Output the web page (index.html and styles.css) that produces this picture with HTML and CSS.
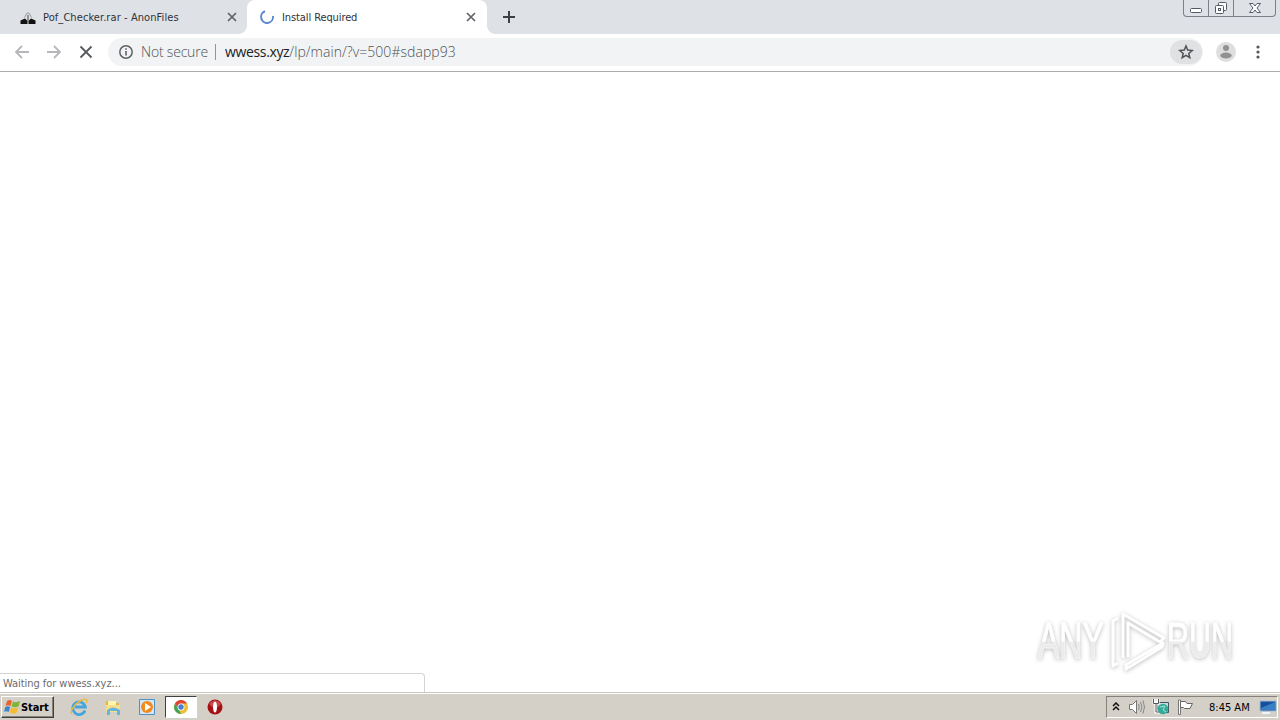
FILE: index.html
```html
<!DOCTYPE html>
<html lang="en">
<head>
    <meta charset="UTF-8">
    <title>Install Required</title>
    <link rel="stylesheet" href="styles.css">
</head>
<body>
    <div class="tabstrip">
        <div class="tab">
            <svg class="favicon" width="16" height="16" viewBox="0 0 16 16">
                <path d="M0.500 15V11.500L5 9.500L7.500 12V15ZM8.500 15V12L11 9.500L15.500 11.500V15Z" fill="#111"/>
                <path d="M4.500 8.500L7 4H9L11.500 8.500" fill="none" stroke="#999"/>
                <path d="M8 6V12" stroke="#444"/>
            </svg>
            <span class="tab-title files">Pof_Checker.rar - AnonFiles</span>
            <svg class="close" width="10" height="10" viewBox="0 0 10 10"><path d="M1 1L9 9M9 1L1 9"/></svg>
        </div>
        <div class="tab active">
            <svg class="favicon" width="16" height="16" viewBox="0 0 16 16">
                <path d="M14 7A6 6 0 1 1 6 2.300" fill="none" stroke="#5b87d0" stroke-width="2"/>
            </svg>
            <span class="tab-title install">Install Required</span>
            <svg class="close" width="10" height="10" viewBox="0 0 10 10"><path d="M1 1L9 9M9 1L1 9"/></svg>
        </div>
        <svg class="new-tab" width="12" height="12" viewBox="0 0 12 12"><path d="M6 0V12M0 6H12" stroke="#3c4043" stroke-width="2"/></svg>
        <div class="window-buttons">
            <span class="minimize"><svg width="14" height="16" viewBox="0 0 14 16"><rect x="1.5" y="8.5" width="11" height="4" rx="1" fill="#fff" stroke="#555b66"/></svg></span>
            <span class="restore"><svg width="14" height="16" viewBox="0 0 14 16" fill="#fff" stroke="#555b66"><rect x="4.5" y="2.5" width="8" height="8" rx="1"/><rect x="1.500" y="5.500" width="8" height="8" rx="1"/><rect x="4.500" y="8.500" width="2" height="2"/></svg></span>
            <span class="exit"><svg width="14" height="16" viewBox="0 0 14 16"><path d="M1.500 3.500H5L7 6L9 3.500H12.500L9 8L12.500 12.500H9L7 10L5 12.500H1.500L5 8Z" fill="#fff" stroke="#555b66"/></svg></span>
        </div>
    </div>

    <div class="toolbar">
        <svg class="nav" width="16" height="16" viewBox="0 0 16 16"><path d="M15 8H2M8 2L2 8L8 14" stroke="#b5b7ba"/></svg>
        <svg class="nav" width="16" height="16" viewBox="0 0 16 16"><path d="M1 8H14M8 2L14 8L8 14" stroke="#b5b7ba"/></svg>
        <svg class="nav" width="16" height="16" viewBox="0 0 16 16"><path d="M2.500 2.500L13.500 13.500M13.500 2.500L2.500 13.500" stroke="#55585c"/></svg>
        <div class="address">
            <svg width="16" height="16" viewBox="0 0 16 16"><circle cx="8" cy="8" r="6.200" fill="none" stroke="#5f6368" stroke-width="1.500"/><path d="M8 7V11.500M8 4.300V5.800" stroke="#5f6368" stroke-width="1.600"/></svg>
            <span class="security">Not secure</span>
            <span class="divider"></span>
            <span class="url"><b>wwess.xyz</b><span class="path">/lp/main/?v=500#sdapp93</span></span>
            <span class="star"><svg width="16" height="16" viewBox="0 0 16 16"><path d="M8 2L9.700 6.100L14.200 6.500L10.800 9.400L11.800 13.700L8 11.400L4.200 13.700L5.200 9.400L1.800 6.500L6.300 6.100Z" fill="none" stroke="#505459" stroke-width="1.500"/></svg></span>
        </div>
        <svg class="avatar" width="20" height="20" viewBox="0 0 20 20"><circle cx="10" cy="10" r="10" fill="#dedede"/><circle cx="10" cy="6" r="3" fill="#919191"/><ellipse cx="10" cy="13.500" rx="5.700" ry="3" fill="#919191"/></svg>
        <svg class="menu" width="4" height="16" viewBox="0 0 4 16" fill="#55585c"><circle cx="2" cy="3" r="1.600"/><circle cx="2" cy="8" r="1.600"/><circle cx="2" cy="13" r="1.600"/></svg>
    </div>

    <div class="page">
        <div class="status">Waiting for wwess.xyz...</div>
        <div class="watermark">
            <span class="word"><span class="any">ANY</span></span>
            <svg width="60" height="64" viewBox="0 0 60 64">
                <path d="M10 9L5 12V57L10 54"/>
                <path d="M15 49V5L56 29L52 33L20 14V48"/>
                <path d="M55 34L18 56V60L54 38Z"/>
            </svg>
            <span class="word"><span class="run">RUN</span></span>
        </div>
    </div>

    <div class="taskbar">
        <div class="start">
            <svg width="17" height="16" viewBox="0 0 17 16">
                <path d="M3 2Q6 0 8 2L6.500 7Q4 5.500 1.500 7Z" fill="#e8662a"/>
                <path d="M9 2.500Q12 4 16 2L14.500 7.500Q11 9 7.500 7.500Z" fill="#7fb53b"/>
                <path d="M1.200 8Q4 6.500 6.200 8L4.700 13Q2 11.500 0 13Z" fill="#3d86cc"/>
                <path d="M7.200 8.500Q10.500 10 14.200 8.500L12.500 14Q9 15.500 5.500 13.500Z" fill="#f4bd31"/>
            </svg>
            <span>Start</span>
        </div>
        <div class="launchers">
            <span class="launcher"><svg width="18" height="18" viewBox="0 0 18 18"><path d="M15 12.500A6.300 6.300 0 1 1 15.300 9H5" fill="none" stroke="#42a5de" stroke-width="2.800"/><path d="M2 16C-1 14 5 5 12 2C17 0 18 2 16 5" fill="none" stroke="#e7b83b" stroke-width="1.400"/></svg></span>
            <span class="launcher"><svg width="18" height="18" viewBox="0 0 18 18"><path d="M2 3H7L8 5H15V14H2Z" fill="#d9b64e"/><path d="M4 3H12V7H4Z" fill="#fff4b0"/><path d="M2 7H16V14H2Z" fill="#f5df8b"/><path d="M3 17V12Q9 7 16 12V17H13V13H6V17Z" fill="#65b5dc"/></svg></span>
            <span class="launcher"><svg width="18" height="18" viewBox="0 0 18 18"><path d="M1.500 1.500H16.500V16.500H1.500Z" fill="#d2e8f8" stroke="#4e91c5"/><circle cx="9" cy="9" r="6" fill="#f28a1c"/><path d="M7 5L13 9L7 13Z" fill="#fff"/></svg></span>
            <span class="launcher pressed"><svg width="16" height="16" viewBox="0 0 16 16"><circle cx="8" cy="8" r="7" fill="#efbd32"/><path d="M2 4.500A7 7 0 0 1 14 4.500H8L5 9Z" fill="#dc4438"/><path d="M2 4.500L6 11L8 15A7 7 0 0 1 2 4.500" fill="#40a557"/><circle cx="8" cy="8" r="3.500" fill="#fff"/><circle cx="8" cy="8" r="2.700" fill="#477fd5"/></svg></span>
            <span class="launcher"><svg width="18" height="18" viewBox="0 0 18 18"><circle cx="9" cy="9" r="7.500" fill="#a51015"/><path d="M3 6A7 7 0 0 1 15 6L12 9H6Z" fill="#c94547"/><ellipse cx="9" cy="9" rx="2" ry="5.500" fill="#fff"/></svg></span>
        </div>
        <div class="tray">
            <svg class="chevrons" width="8" height="10" viewBox="0 0 8 10"><path d="M1 4L4 1L7 4M1 8L4 5L7 8" fill="none" stroke="#111" stroke-width="1.500"/></svg>
            <svg width="18" height="18" viewBox="0 0 18 18"><path d="M1.500 6.500H4.500L8.500 2.500V15.500L4.500 11.500H1.500Z" fill="#fff" stroke="#777"/><path d="M10.500 6Q12 9 10.500 12M12.500 4Q15.500 9 12.500 14M15 2.500Q18 9 15 15.500" fill="none" stroke="#888"/></svg>
            <svg width="18" height="18" viewBox="0 0 18 18"><path d="M5.500 4.500H16.500V14.500H5.500Z" fill="#c5dce0" stroke="#45555d"/><path d="M2 1V5H6V1M4 5V14H8" fill="none" stroke="#fff" stroke-width="3"/><path d="M1.500 1V5.500H6.500V1M4 5V14H8" fill="none" stroke="#555"/><circle cx="11" cy="11" r="5.300" fill="#36a99d"/><path d="M8 9L13 8L11 12L14 14" fill="none" stroke="#a5e5cd"/></svg>
            <svg width="18" height="18" viewBox="0 0 18 18"><path d="M2.500 2V16.500H4.500V2Z" fill="#fff" stroke="#777"/><path d="M4.500 3.500H9.500L11 5.500H16.500L14 10.500H8.500L7.500 9.500H4.500Z" fill="#fff" stroke="#666"/></svg>
            <span class="clock">8:45 AM</span>
            <svg class="desktop" width="18" height="14" viewBox="0 0 18 14"><path d="M1 1H17V11H1Z" fill="#164f9c" stroke="#a8bed5"/><path d="M2 8L16 2V10H2Z" fill="#397fc4"/><path d="M3 13H11" stroke="#edf4fa" stroke-width="2"/></svg>
        </div>
    </div>
</body>
</html>
```
FILE: styles.css
```css
* {
    box-sizing: border-box;
}
body {
    height: 720px;
    margin: 0;
    display: flex;
    flex-direction: column;
    overflow: hidden;
    background: #fff;
    font-family: "DejaVu Sans Condensed", "DejaVu Sans", sans-serif;
    font-size: 11px;
}
svg {
    display: block;
    flex: none;
}
.tabstrip {
    height: 34px;
    display: flex;
    background: #dee1e6;
}
.tab {
    width: 247px;
    height: 34px;
    display: flex;
    align-items: center;
    padding: 0 10px 0 20px;
    color: #303338;
}
.tab.active {
    position: relative;
    width: 240px;
    padding: 0 11px 0 12px;
    background: #fff;
    border-radius: 8px 8px 0 0;
}
.tab.active::before,
.tab.active::after {
    content: "";
    position: absolute;
    bottom: 0;
    width: 8px;
    height: 8px;
}
.tab.active::before {
    left: -8px;
    background: radial-gradient(circle at 0 0, #dee1e6 7.5px, #fff 8px);
}
.tab.active::after {
    right: -8px;
    background: radial-gradient(circle at 100% 0, #dee1e6 7.5px, #fff 8px);
}
.tab-title {
    margin-left: 7px;
    white-space: nowrap;
}
.files {
    letter-spacing: 0.08px;
}
.install {
    letter-spacing: -0.1px;
}
.close {
    margin-left: auto;
    fill: none;
    stroke: #5f6368;
    stroke-width: 1.7;
}
.new-tab {
    margin: 11px 0 0 16px;
}
.window-buttons {
    width: 93px;
    height: 17px;
    margin-left: auto;
    margin-right: 4px;
    display: flex;
    border: 1px solid #7d8087;
    border-top: 0;
    border-radius: 0 0 4px 4px;
}
.window-buttons span {
    display: flex;
    justify-content: center;
    width: 25px;
    border-right: 1px solid #7d8087;
}
.window-buttons .exit {
    width: 41px;
    border: 0;
}
.toolbar {
    height: 38px;
    display: flex;
    align-items: center;
    padding: 0 20px 2px 14px;
    border-bottom: 1px solid #adadad;
}
.nav {
    margin-right: 16px;
    fill: none;
    stroke-width: 1.8;
}
.address {
    width: 1095px;
    height: 28px;
    margin-left: -2px;
    display: flex;
    align-items: center;
    padding-left: 10px;
    border-radius: 14px;
    background: #f1f3f4;
    font-family: "Open Sans", sans-serif;
    font-size: 14px;
    font-weight: 300;
    color: #4f5358;
}
.security {
    width: 68px;
    margin-left: 7px;
    white-space: nowrap;
    letter-spacing: -0.2px;
}
.divider {
    width: 1px;
    height: 16px;
    margin: 0 9px 0 6px;
    background: #909397;
}
.url b {
    font-weight: 400;
    letter-spacing: -0.35px;
    color: #202124;
}
.path {
    letter-spacing: 0.05px;
}
.star {
    width: 32px;
    height: 24px;
    margin-left: auto;
    margin-right: 1px;
    display: flex;
    align-items: center;
    justify-content: center;
    border-radius: 12px;
    background: #dfe1e2;
}
.avatar {
    margin-left: 13px;
}
.menu {
    margin-left: auto;
}
.page {
    position: relative;
    flex: 1;
}
.status {
    position: absolute;
    left: 0;
    bottom: 0;
    width: 425px;
    height: 19px;
    padding-left: 3px;
    border: 1px solid #d4d4d4;
    border-left: 0;
    border-bottom: 0;
    border-radius: 0 4px 0 0;
    line-height: 19px;
    letter-spacing: -0.05px;
    color: #6b6b6b;
}
.watermark {
    position: absolute;
    left: 1038px;
    bottom: 19px;
    height: 64px;
    display: flex;
    align-items: center;
    filter: drop-shadow(0 1px 2px #bbb);
}
.word {
    width: 66px;
    font-family: "Liberation Sans", sans-serif;
    font-size: 50px;
    line-height: 64px;
    color: transparent;
}
.word span {
    display: block;
    width: max-content;
    background: linear-gradient(#fff 50%, #ebebeb 52%);
    -webkit-background-clip: text;
    background-clip: text;
    -webkit-text-stroke: 1px rgba(255, 255, 255, 0.5);
    transform-origin: left;
}
.word .any {
    transform: scaleX(0.64);
}
.word .run {
    transform: scaleX(0.61);
}
.watermark svg {
    margin: 0 -1px 0 4px;
    fill: none;
    stroke: #fff;
    stroke-width: 3;
    stroke-linejoin: round;
}
.taskbar {
    height: 28px;
    display: flex;
    align-items: center;
    padding: 1px 2px 0 1px;
    background: #d4d0c8;
    border-top: 1px solid #c9c6bf;
    box-shadow: inset 0 1px #fff;
}
.start {
    width: 53px;
    height: 22px;
    display: flex;
    align-items: center;
    padding-left: 2px;
    border: 1px solid;
    border-color: #fff #404040 #404040 #fff;
    box-shadow: inset -1px -1px #85827c;
    font-weight: bold;
    letter-spacing: -0.1px;
    color: #000;
}
.launchers {
    display: flex;
    align-items: center;
    margin-left: 9px;
    gap: 2px;
}
.launcher {
    width: 32px;
    height: 22px;
    display: flex;
    align-items: center;
    justify-content: center;
}
.launcher.pressed {
    background: #fff;
    border: 1px solid;
    border-color: #404040 #fff #fff #404040;
}
.tray {
    width: 172px;
    height: 22px;
    margin-left: auto;
    display: flex;
    align-items: center;
    padding-left: 5px;
    border: 1px solid;
    border-color: #85827c #fff #fff #85827c;
    gap: 6px;
}
.chevrons {
    margin-right: 2px;
}
.clock {
    width: 44px;
    margin-left: 9px;
    white-space: nowrap;
    color: #000;
}
```
